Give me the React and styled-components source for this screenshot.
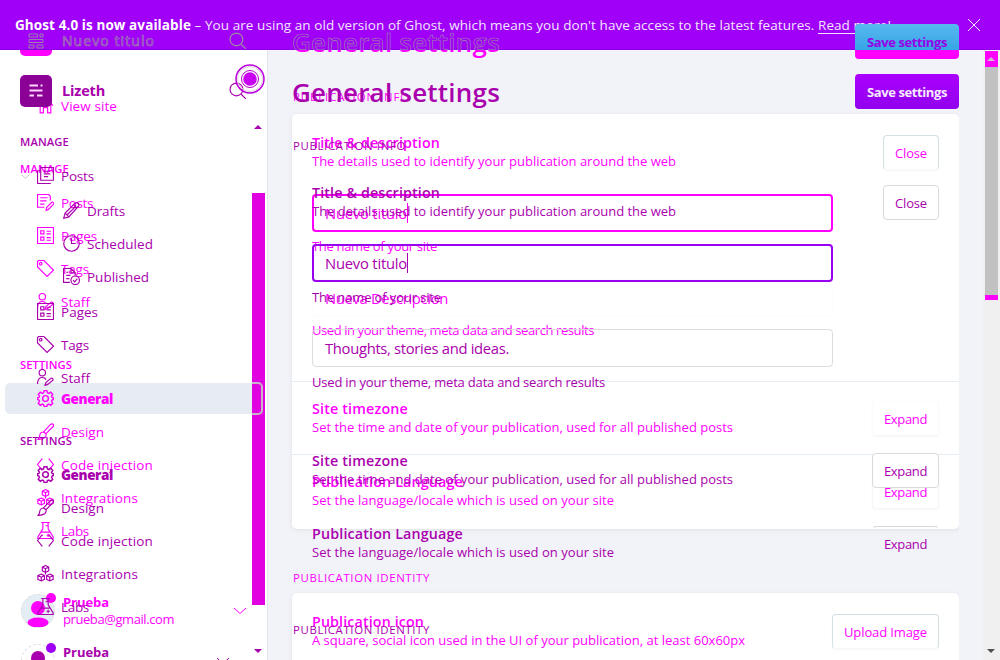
import React, { useLayoutEffect, useRef } from 'react';
import styled, { createGlobalStyle } from 'styled-components';

const PINK = '#ff00ff';
const PLUM = '#a900ad';
const VIOLET = '#a000f8';
const GREY = '#9c8ca4';

const Global = createGlobalStyle`
  * { box-sizing: border-box; }
  html, body, #root { margin: 0; width: 1000px; height: 660px; overflow: hidden; }
  body { font-family: "Open Sans", "Noto Sans", sans-serif; font-size: 13.5px; background: #f2f3f8; }
  h1, p { margin: 0; }
`;

const Screen = styled.div`
  position: relative; width: 1000px; height: 660px; overflow: hidden;
`;
const Layer = styled.div`
  position: absolute; inset: 0; display: flex; color: ${p => p.$color};
`;
const Sidebar = styled.aside`
  display: flex; flex-direction: column; flex: none; width: 268px; height: 660px;
  padding-top: ${p => p.$top}px; overflow: hidden;
  background: ${p => (p.$solid ? '#fff' : 'transparent')};
  border-right: 1px solid ${p => (p.$solid ? '#e4e6ee' : 'transparent')};
  & > * { flex: none; }
`;
const Brand = styled.div`
  display: flex; align-items: flex-start; height: 32px; padding-left: 20px;
`;
const Logo = styled.div`
  width: 32px; height: 32px; border-radius: 5px; margin-right: 10px;
  display: grid; place-items: center; background: ${p => p.$bg}; color: #ffd6ff;
`;
const BrandName = styled.div`
  flex: 1; font-weight: 700; font-size: 14.5px; line-height: 31px;
`;
const GroupTitle = styled.div`
  height: 20px; line-height: 20px; margin-top: ${p => p.$mt}px; padding-left: 20px;
  display: flex; font-size: 11.2px; font-weight: 600;
`;
const NavRow = styled.div`
  display: flex; align-items: center; gap: 7px; margin-top: ${p => p.$mt || 0}px;
  height: ${p => p.$h || 33}px; padding-left: ${p => (p.$sub ? 63 : 37)}px;
  font-weight: ${p => (p.$bold ? 800 : 400)};
  svg { flex: none; }
`;
const ActiveRow = styled(NavRow)`
  margin-left: 5px; width: 258px; padding-left: 32px; border-radius: 5px; background: #e7ebf2;
  height: 31px; margin-bottom: 1px;
`;
const User = styled.div`
  display: flex; align-items: flex-start; margin-top: ${p => p.$mt}px; padding-left: 21px; height: 33px;
`;
const Avatar = styled.div`
  position: relative; width: 34px; height: 34px; border-radius: 50%; margin-right: 8px; overflow: visible;
  background: ${p => (p.$solid ? '#e5edf4' : 'transparent')}; border: 1px dashed #dbe0e5;
  & > svg { display: block; }
`;
const Status = styled.i`
  position: absolute; top: -2px; right: -2px; width: 10px; height: 10px; border-radius: 50%;
  background: ${p => p.$bg};
`;
const UserText = styled.div`
  display: flex; flex-direction: column; width: 159px; line-height: 17px; font-size: 13px;
  b { font-weight: 700; }
`;
const UserArrow = styled.div`
  margin-top: ${p => p.$mt}px; margin-left: ${p => p.$ml}px;
`;

const Main = styled.main`
  display: flex; flex-direction: column; width: 691px; height: 660px; overflow: hidden;
  padding: ${p => p.$top}px 0 0 24px;
  & > * { flex: none; width: 667px; }
`;
const Header = styled.header`
  display: flex; justify-content: space-between; height: 35px;
`;
const Heading = styled.h1`
  font-size: 26px; font-weight: 600; line-height: 36px;
`;
const Save = styled.div`
  width: 104px; height: 35px; border-radius: 4px; display: grid; place-items: center;
  background: ${p => p.$bg}; color: ${p => p.$fg || '#f5eaff'}; font-weight: 700; font-size: 13px;
`;
const Caption = styled.div`
  height: 20px; line-height: 20px; margin-top: ${p => p.$mt}px; padding-left: 1px; font-size: 11.4px;
`;
const Card = styled.section`
  margin-top: ${p => p.$mt}px; height: ${p => p.$h}px; background: #fff;
  border-radius: 5px; box-shadow: 0 1px 4px rgba(30, 40, 60, 0.09);
`;
const Section = styled.div`
  height: ${p => p.$h}px; padding: ${p => p.$pt}px 20px 0 20px;
  border-bottom: ${p => (p.$line ? '1px solid #e5ecf3' : '0')};
`;
const Setting = styled.div`
  display: flex; justify-content: space-between; align-items: flex-start; height: 36px;
`;
const SettingText = styled.div`
  display: flex; flex-direction: column; font-size: 13px; line-height: 18px;
  b { font-weight: 600; font-size: 14.3px; }
`;
const Button = styled.div`
  width: ${p => p.$w}px; height: 35px; margin-top: ${p => p.$mt}px; border-radius: 4px;
  display: grid; place-items: center; font-size: 13px;
  background: ${p => (p.$open ? 'transparent' : '#fff')};
  border: 1px solid ${p => p.$bd};
  border-bottom-color: ${p => (p.$soft ? '#f7f8f9' : p.$bd)};
  box-shadow: ${p => (p.$soft ? '0 1px 2px rgba(0, 0, 0, 0.035)' : 'none')};
  ${p => p.$open && 'border-left-color: transparent; border-right-color: transparent; border-bottom-color: transparent;'}
`;
const Field = styled.div`
  width: 521px; height: 38px; margin-top: ${p => p.$mt}px; border-radius: 4px;
  border: ${p => p.$bw}px solid ${p => p.$bd}; padding-left: ${p => 13 - p.$bw}px;
  display: flex; align-items: center; font-size: 14.8px;
`;
const Caret = styled.i`
  width: 1px; height: 20px; background: currentColor;
`;
const Hint = styled.p`
  height: 20px; line-height: 20px; font-size: 13px; margin-top: ${p => p.$mt}px;
`;

const Banner = styled.div`
  position: absolute; top: 0; left: 0; width: 1000px; height: 50px; background: ${VIOLET};
  border-bottom: 1px solid #8c00e8; color: #f2e5ff; display: flex; align-items: center;
  padding: 0 18px 0 15px; font-size: 13.5px; line-height: 20px;
  b { font-weight: 700; color: #fff; }
  & > svg { margin-left: auto; }
`;
const ReadMore = styled.span`
  height: 18px; line-height: 18px; border-bottom: 1px solid #f2e5ff;
`;
const Ghost = styled.div`
  position: absolute; top: 0; left: 0; width: 1000px; height: 50px; overflow: hidden;
  display: flex; align-items: flex-start; color: ${VIOLET};
  -webkit-text-stroke: 0.6px ${GREY};
`;
const GhostIcon = styled.div`
  margin: ${p => p.$m}; line-height: 0; color: ${GREY}; -webkit-text-stroke: 0;
`;
const GhostName = styled.div`
  width: 148px; margin-top: 31px; line-height: 20px; font-size: 14px;
`;
const GhostHeading = styled(Heading)`
  width: 563px; margin-top: 24px;
`;
const GhostSave = styled(Save)`
  margin-top: 24px; -webkit-text-stroke: 0;
`;

const SideScroll = styled.div`
  position: absolute; left: 252px; top: 193px; width: 13px; height: 412px; background: #e000e0;
`;
const ActiveEdge = styled.div`
  position: absolute; left: 252px; top: 382px; width: 11px; height: 33px;
  border: 2px solid #c9b3c9; border-left: 0; border-radius: 0 5px 5px 0;
`;
const Arrow = styled.i`
  position: absolute; left: ${p => p.$x}px; top: ${p => p.$y}px; width: 0; height: 0;
  border: 4px solid transparent;
  ${p => (p.$down ? 'border-top-color' : 'border-bottom-color')}: ${p => p.$c};
  ${p => (p.$down ? 'border-bottom-width' : 'border-top-width')}: 0;
`;
const Collapse = styled.div`
  position: absolute; left: 20px; top: 171px; line-height: 0; color: #b5b0b5;
`;
const Cursor = styled.div`
  position: absolute; left: 235px; top: 64px; width: 30px; height: 30px; line-height: 0;
`;
const SearchSpot = styled.div`
  position: absolute; left: 229px; top: 82px; line-height: 0; color: ${PLUM};
`;
const PageScroll = styled.div`
  display: flex; flex-direction: column; align-items: center; width: 17px; height: 660px;
  margin-left: auto; padding-top: 51px; background: #f0f0f0;
`;
const Bar = styled.div`
  width: 13px; height: ${p => p.$h}px; background: ${p => p.$bg};
`;
const FitText = styled.span`
  display: inline-block; white-space: pre; justify-self: center; align-self: flex-start;
  ${Button} &, ${Save} &, ${Field} &, ${NavRow} &, ${Banner} & { align-self: center; }
`;

/* Spreads the letters so that the text takes exactly w pixels. */
function Fit({ w, children }) {
  const ref = useRef(null);
  useLayoutEffect(() => {
    const el = ref.current;
    el.style.letterSpacing = '0px';
    const natural = el.getBoundingClientRect().width;
    el.style.letterSpacing = `${(w - natural) / el.textContent.length}px`;
  }, [w]);
  return <FitText ref={ref}>{children}</FitText>;
}

const paths = {
  home: <path d="M1 8 8 1.5 15 8M3 7v8h3v-5h4v5h3V7M12 4V2h2" />,
  posts: <path d="M3.500.5h12v12h-12zM3.500 3.500H.5v12h12.500M6.500 4h6M6.500 6.500h6M6.500 9h4" />,
  edit: <path d="M12.500 6V2l-1.500-1.500H.5v12H7M3 3.500h7M3 6.500h6M3 9.500h4M8.500 15.500l.7-3 5-5q2 0 1.500 2l-5 5z" />,
  pages: <path d="M.5.5h15v15H.5zM3.500 3.500h3v3h-3zM3.500 9.500h3v3h-3zM9 4h4M9 6.500h4M9 10h4M9 12.500h4" />,
  tags: <><path d="M.5 1.500v5l9 9 6-6-9-9h-5z" /><circle cx="3.500" cy="3.500" r="1.200" /></>,
  staff: <><circle cx="5" cy="3.500" r="3" /><path d="M.5 14q0-6 4.500-6 2.500 0 3.500 2M7.500 15.500l1-3 5-4q2 0 1.500 2l-5 4z" /></>,
  pencil: <path d="M.7 15.300 2 10.500 11.500 1q2-1 3 .5t0 2.500L5.500 14zM2 10.500 5.500 14M10 2.500 13.500 6M4 12l8-8" />,
  clock: <><circle cx="8" cy="8" r="7.300" /><path d="M8 3v5h4" /></>,
  published: <><path d="M6.500 13.500H.5V.5h7l4 4V7M7.500.5v4h4M3 4h2M3 7h4M3 10h3" /><circle cx="11.500" cy="11.500" r="4" /><path d="m9.500 11.500 1.500 1.500 2.500-3" /></>,
  gear: <><path d="M6.700.6h2.600l.5 2.100 1.200.5 1.900-1.100 1.900 1.900L13.700 5.900l.5 1.100 1.300.3v1.600l-1.300.5-.5 1.200 1.100 1.900-1.900 1.900-1.900-1.100-1.200.5-.5 1.700H6.700l-.5-1.700-1.200-.5-1.900 1.100-1.900-1.900 1.100-1.900-.5-1.200-1.300-.5V7.300L1.800 7l.5-1.100L1.200 4l1.900-1.900L5 3.200l1.200-.5z" /><circle cx="8" cy="8" r="2.700" /></>,
  design: <path d="M6 8.500 12.500 1.500q2-1.500 3 0 .5 1-.5 2L8.500 10zM6 8.500 8.500 10q1 5-7.500 5.500Q2.500 14 2.500 12 3 8.500 6 8.500z" />,
  code: <path d="M5 2.500.5 8 5 13.500M11 2.500 15.500 8 11 13.500" />,
  integrations: <path d="M8 .5 11 2v3.500L8 7 5 5.500V2zM5 2l3 1.500L11 2M8 3.500V7M4 8.500 7 10v3.500L4 15 .8 13.500V10zM.8 10 4 11.500 7 10M4 11.500V15M12 8.500l3.200 1.500v3.500L12 15l-3-1.500V10zM9 10l3 1.500 3.200-1.500M12 11.500V15M8 7v2" />,
  labs: <path d="M4 .5h8M5.500.5v6L.8 14v1.500h14.400V14l-4.700-7.500v-6M8 3.500h2.500M4 9.500h8M9 12.500h3M10.500 11v3M4.500 12.500h1" />,
  search: <><circle cx="7" cy="7" r="6" /><path d="m11.500 11.500 4.500 4.500" /></>,
  down: <path d="m2 5 6 5.500L14 5" />,
  close: <path d="m2 2 12 12M14 2 2 14" />,
  ghost: <path d="M1.500 2.500H10M12.500 2.500h2M1.500 7.500h13M1.500 12.500H6M9 12.500h5.500" />,
  ghostLine: <path d="M1 1h8.500v3H1zM12 1h3v3h-3zM1 6.500h14v3H1zM1 12h5v3H1zM9 12h6v3H9z" />,
};
const Drawing = styled.svg`
  display: block; fill: none; stroke: currentColor; stroke-width: ${p => p.$sw};
`;
const Icon = ({ name, size = 16, sw = 1.1 }) => (
  <Drawing width={size} height={size} viewBox="0 0 16 16" $sw={sw}>{paths[name]}</Drawing>
);

const Nav = ({ icon, w, children, ...rest }) => (
  <NavRow {...rest}><Icon name={icon} size={17} sw={rest.$bold ? 1.4 : 1.1} /><Fit w={w}>{children}</Fit></NavRow>
);
const Person = ({ color, dot, solid }) => (
  <Avatar $solid={solid}>
    <svg width="32" height="32" viewBox="0 0 32 32" fill={color}>
      <circle cx="16" cy="13" r="7" /><ellipse cx="16" cy="27.500" rx="10.500" ry="5" />
    </svg>
    <Status $bg={dot} />
  </Avatar>
);
const Row = ({ title, tw, text, dw, children }) => (
  <Setting>
    <SettingText><b><Fit w={tw}>{title}</Fit></b><Fit w={dw}>{text}</Fit></SettingText>
    {children}
  </Setting>
);

const info = { title: 'Title & description', tw: 128, text: 'The details used to identify your publication around the web', dw: 364 };
const zone = { title: 'Site timezone', tw: 96, text: 'Set the time and date of your publication, used for all published posts', dw: 421 };
const lang = { title: 'Publication Language', tw: 151, text: 'Set the language/locale which is used on your site', dw: 302 };
const iconRow = { title: 'Publication icon', tw: 112, text: 'A square, social icon used in the UI of your publication, at least 60x60px', dw: 433 };

const lower = [
  ['design', 'Design', 43], ['code', 'Code injection', 92],
  ['integrations', 'Integrations', 77], ['labs', 'Labs', 28],
];

export default function App() {
  return (
    <Screen>
      <Global />
      <Layer $color={PINK}>
        <Sidebar $top={24} $solid>
          <Brand><Logo $bg={PINK} /></Brand>
          <Nav icon="home" w={56} $mt={33}>View site</Nav>
          <GroupTitle $mt={37}><Fit w={49}>MANAGE</Fit></GroupTitle>
          <Nav icon="edit" w={32} $mt={7}>Posts</Nav>
          <Nav icon="pages" w={36}>Pages</Nav>
          <Nav icon="tags" w={28}>Tags</Nav>
          <Nav icon="staff" w={29}>Staff</Nav>
          <GroupTitle $mt={37}><Fit w={52}>SETTINGS</Fit></GroupTitle>
          <ActiveRow $mt={8} $bold><Icon name="gear" size={17} sw={1.3} /><Fit w={52}>General</Fit></ActiveRow>
          {lower.map(([i, t, w]) => <Nav key={i} icon={i} w={w}>{t}</Nav>)}
          <User $mt={47}>
            <Person color={PINK} dot={PINK} solid />
            <UserText><b><Fit w={46}>Prueba</Fit></b><Fit w={111}>prueba@gmail.com</Fit></UserText>
            <UserArrow $mt={9} $ml={10}><Icon name="down" sw={1} /></UserArrow>
          </User>
        </Sidebar>
        <Main $top={24}>
          <Header>
            <Heading><Fit w={208}>General settings</Fit></Heading>
            <Save $bg={PINK} />
          </Header>
          <Caption $mt={28}><Fit w={117}>PUBLICATION INFO</Fit></Caption>
          <Card $mt={7} $h={415}>
            <Section $h={268} $pt={20} $line>
              <Row {...info}><Button $w={56} $mt={1} $bd="#d5dfe4" $soft><Fit w={32}>Close</Fit></Button></Row>
              <Field $mt={24} $bw={2} $bd={PINK}><Fit w={82}>Nuevo titulo</Fit><Caret /></Field>
              <Hint $mt={4}><Fit w={125}>The name of your site</Fit></Hint>
              <Field $mt={23} $bw={1} $bd="#fbfcfc"><Fit w={123}>Nueva Descripcion</Fit></Field>
              <Hint $mt={3}><Fit w={282}>Used in your theme, meta data and search results</Fit></Hint>
            </Section>
            <Section $h={73} $pt={18} $line>
              <Row {...zone}><Button $w={67} $mt={1} $bd="#fafbfb" $soft><Fit w={43}>Expand</Fit></Button></Row>
            </Section>
            <Section $h={74} $pt={18}>
              <Row {...lang}><Button $w={67} $mt={1} $bd="#f3f5f6" $soft><Fit w={43}>Expand</Fit></Button></Row>
            </Section>
          </Card>
          <Caption $mt={39}><Fit w={137}>PUBLICATION IDENTITY</Fit></Caption>
          <Card $mt={5} $h={100}>
            <Section $h={90} $pt={20}>
              <Row {...iconRow}><Button $w={107} $mt={1} $bd="#d5dfe4" $soft><Fit w={83}>Upload Image</Fit></Button></Row>
            </Section>
          </Card>
        </Main>
        <PageScroll>
          <Bar $h={16} $bg={PINK} /><Bar $h={228} $bg="#c1c1c1" /><Bar $h={5} $bg={PINK} />
        </PageScroll>
      </Layer>

      <SideScroll />
      <ActiveEdge />
      <Collapse><Icon name="down" size={11} /></Collapse>

      <Banner>
        <b><Fit w={176}>Ghost 4.0 is now available</Fit></b>
        <Fit w={627}> – You are using an old version of Ghost, which means you don't have access to the latest features. </Fit>
        <ReadMore><Fit w={73}>Read more!</Fit></ReadMore>
        <Icon name="close" sw={1} />
      </Banner>
      <Ghost>
        <GhostIcon $m="33px 18px 0 28px"><Icon name="ghostLine" sw={0.9} /></GhostIcon>
        <GhostName><Fit w={93}>Nuevo titulo</Fit></GhostName>
        <GhostIcon $m="32px 46px 0 19px"><Icon name="search" size={17} /></GhostIcon>
        <GhostHeading><Fit w={208}>General settings</Fit></GhostHeading>
        <GhostSave $bg="linear-gradient(#58b8f0, #35a5e4 75%)" $fg="#9600e8"><Fit w={80}>Save settings</Fit></GhostSave>
      </Ghost>

      <Layer $color={PLUM}>
        <Sidebar $top={75}>
          <Brand>
            <Logo $bg="#8b0095"><Icon name="ghost" sw={2} /></Logo>
            <BrandName><Fit w={43}>Lizeth</Fit></BrandName>
          </Brand>
          <GroupTitle $mt={25}><Fit w={49}>MANAGE</Fit></GroupTitle>
          <Nav icon="posts" w={33} $mt={7}>Posts</Nav>
          <Nav icon="pencil" w={38} $mt={2} $sub>Drafts</Nav>
          <Nav icon="clock" w={66} $sub>Scheduled</Nav>
          <Nav icon="published" w={62} $sub>Published</Nav>
          <Nav icon="pages" w={37} $mt={2}>Pages</Nav>
          <Nav icon="tags" w={28}>Tags</Nav>
          <Nav icon="staff" w={29}>Staff</Nav>
          <GroupTitle $mt={37}><Fit w={52}>SETTINGS</Fit></GroupTitle>
          <Nav icon="gear" w={52} $mt={7} $bold>General</Nav>
          {lower.map(([i, t, w]) => <Nav key={i} icon={i} w={w}>{t}</Nav>)}
          <User $mt={21}>
            <Person color={PLUM} dot={VIOLET} />
            <UserText><b><Fit w={46}>Prueba</Fit></b></UserText>
            <UserArrow $mt={9} $ml={-7}><Icon name="down" sw={1} /></UserArrow>
          </User>
        </Sidebar>
        <Main $top={74}>
          <Header>
            <Heading><Fit w={208}>General settings</Fit></Heading>
            <Save $bg="linear-gradient(#ab00ff, #9100ed)"><Fit w={80}>Save settings</Fit></Save>
          </Header>
          <Caption $mt={27}><Fit w={113}>PUBLICATION INFO</Fit></Caption>
          <Section $h={277} $pt={28}>
            <Row {...info}><Button $w={56} $mt={1} $bd="#dadada"><Fit w={32}>Close</Fit></Button></Row>
            <Field $mt={24} $bw={2} $bd="#9a00f0"><Fit w={82}>Nuevo titulo</Fit><Caret /></Field>
            <Hint $mt={5}><Fit w={129}>The name of your site</Fit></Hint>
            <Field $mt={22} $bw={1} $bd="#dcdcdc"><Fit w={184}>Thoughts, stories and ideas.</Fit></Field>
            <Hint $mt={5}><Fit w={293}>Used in your theme, meta data and search results</Fit></Hint>
          </Section>
          <Section $h={73} $pt={19}>
            <Row {...zone}><Button $w={67} $mt={1} $bd="#dadada"><Fit w={43}>Expand</Fit></Button></Row>
          </Section>
          <Section $h={74} $pt={19}>
            <Row {...lang}><Button $w={67} $mt={1} $bd="#d8d8da" $open><Fit w={43}>Expand</Fit></Button></Row>
          </Section>
          <Caption $mt={40}><Fit w={137}>PUBLICATION IDENTITY</Fit></Caption>
        </Main>
      </Layer>

      <SearchSpot><Icon name="search" size={17} /></SearchSpot>
      <Cursor>
        <svg width="30" height="30" viewBox="0 0 30 30" fill="none">
          <circle cx="15" cy="15" r="14" stroke="#bd00df" strokeWidth="1.500" />
          <circle cx="15" cy="15" r="12.500" stroke="#ddd0dd" strokeWidth="1" />
          <circle cx="15" cy="15" r="8.500" stroke="#b000c8" strokeWidth="1" />
          <circle cx="15" cy="15" r="6.800" fill="#c800f2" />
        </svg>
      </Cursor>
      <Arrow $x={254} $y={125} $c={PLUM} />
      <Arrow $x={254} $y={649} $c={PLUM} $down />
      <Arrow $x={987} $y={57} $c="#cfb8cf" />
      <Arrow $x={987} $y={649} $c="#505050" $down />
    </Screen>
  );
}
